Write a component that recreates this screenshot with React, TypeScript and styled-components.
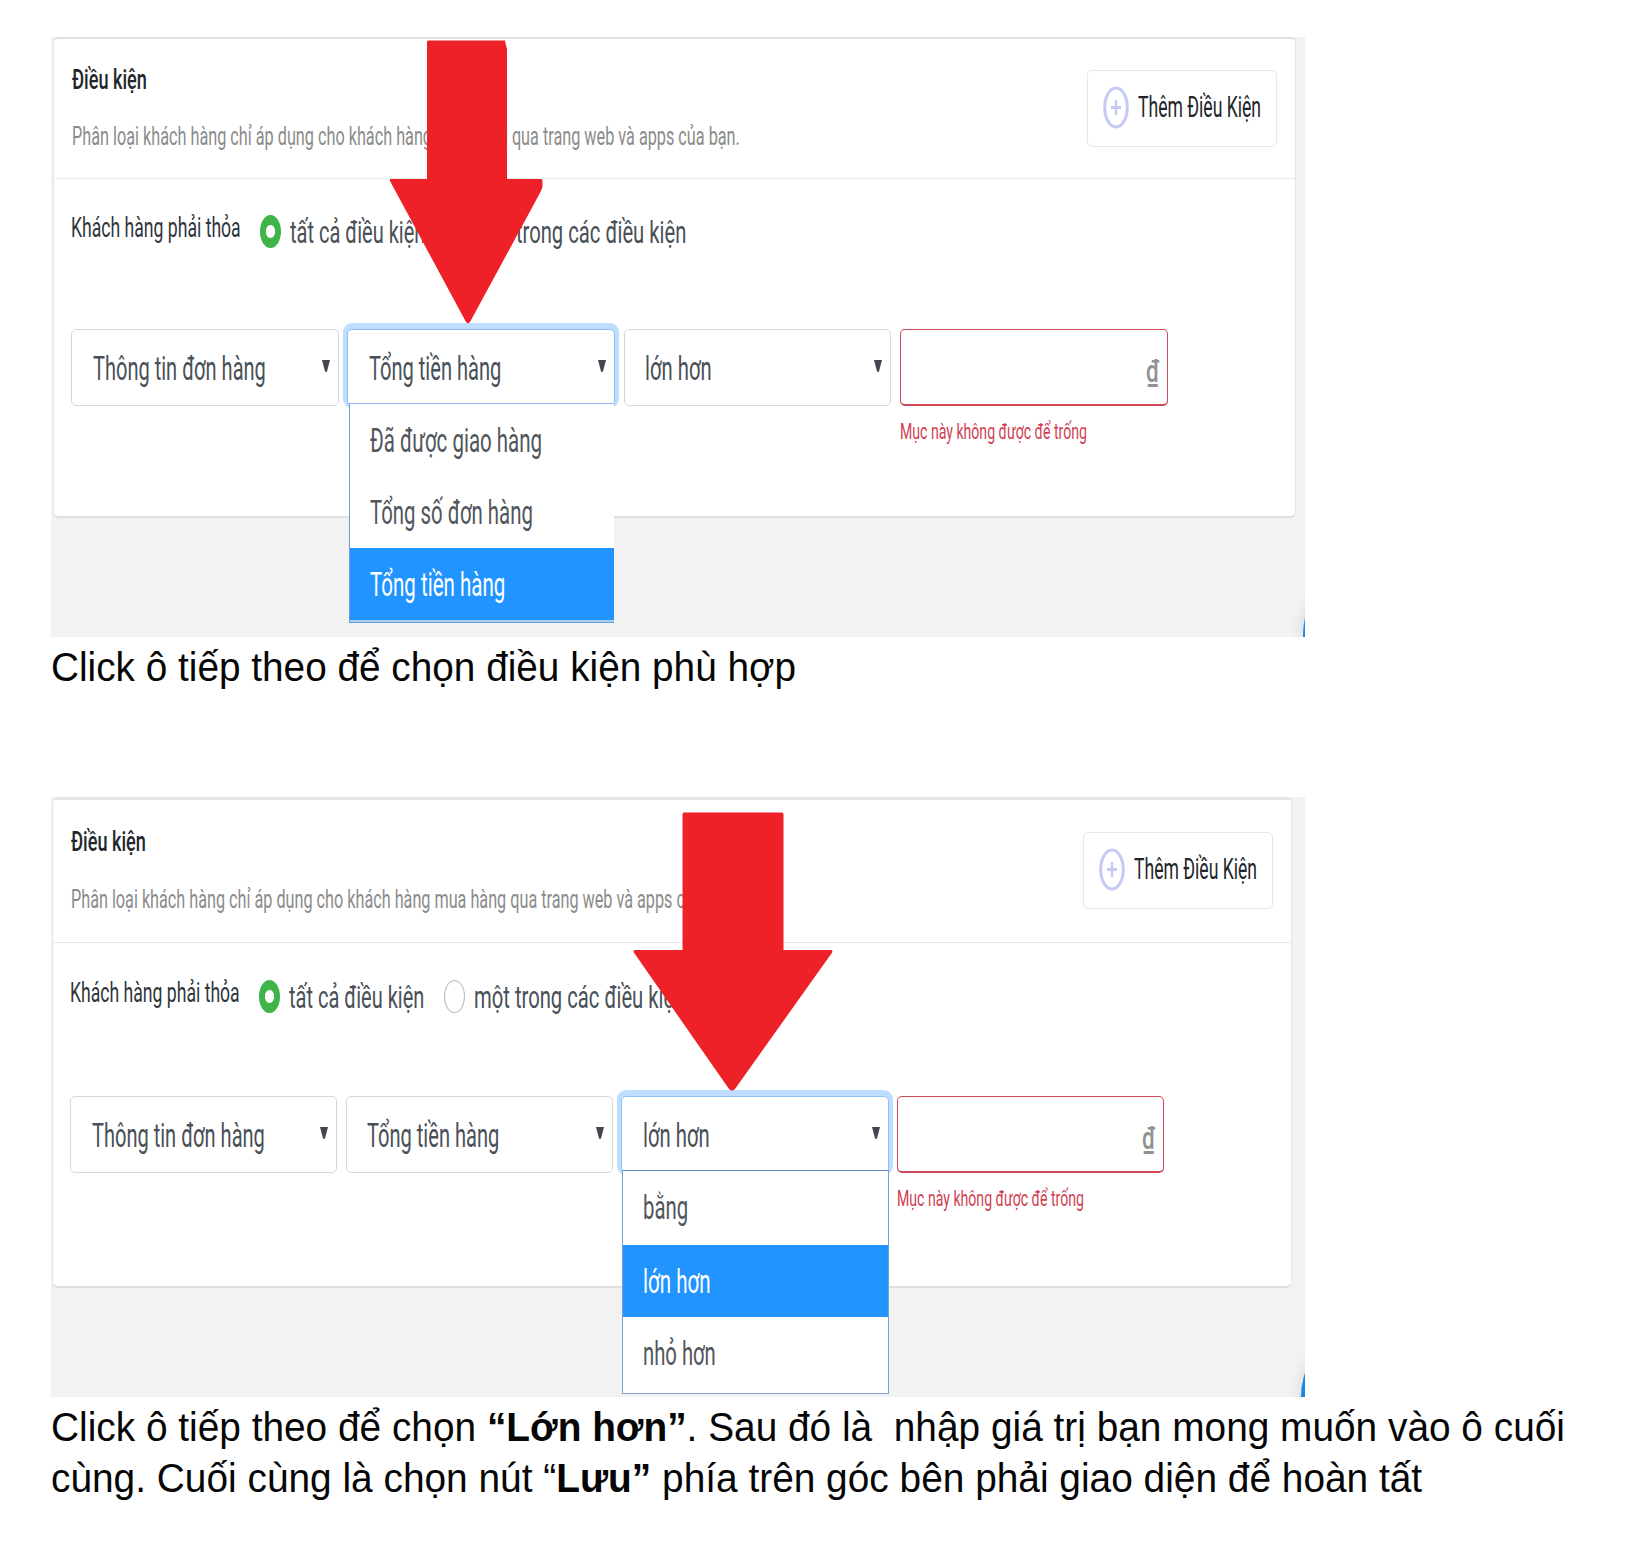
import React, { useLayoutEffect, useRef, useState } from "react";
import styled, { createGlobalStyle, css } from "styled-components";

const GlobalStyle = createGlobalStyle`
  *, *::before, *::after { box-sizing: border-box; }
  body { margin: 0; background: #fff; }
`;

/* ---------- text condensed to a given width ---------- */

const FitBox = styled.span<{ $w: number }>`
  display: block;
  flex: none;
  width: ${(p) => p.$w}px;
  white-space: pre;
`;

const FitInner = styled.span`
  display: inline-block;
  transform-origin: 0 50%;
`;

function Fit({ w, children }: { w: number; children: React.ReactNode }) {
  const ref = useRef<HTMLSpanElement>(null);
  const [scale, setScale] = useState(1);
  useLayoutEffect(() => {
    if (ref.current) setScale(w / ref.current.offsetWidth);
  }, [w]);
  return (
    <FitBox $w={w}>
      <FitInner ref={ref} style={{ transform: `scaleX(${scale})` }}>
        {children}
      </FitInner>
    </FitBox>
  );
}

/* ---------- page ---------- */

const Page = styled.main`
  width: 1652px;
  height: 1541px;
  padding: 37px 0 0 51px;
  background: #fff;
  overflow: hidden;
`;

const Caption = styled.p<{ $gap: number }>`
  margin: 0;
  padding-top: 5px;
  height: ${(p) => p.$gap}px;
  font: 40px/51px "Liberation Sans", Arial, sans-serif;
  color: #060606;
`;

const Shot = styled.section`
  position: relative;
  width: 1254px;
  height: 600px;
  overflow: hidden;
  background: #f2f2f2;
  font-family: Roboto, sans-serif;
`;

const Card = styled.div<{ $l: number; $w: number; $h: number; $top: number }>`
  width: ${(p) => p.$w}px;
  height: ${(p) => p.$h}px;
  margin-left: ${(p) => p.$l}px;
  background: #fff;
  border: 1px solid #e6e6e6;
  border-top: ${(p) => p.$top}px solid ${(p) => (p.$top > 2 ? "#e6e6e6" : "#dfdfdf")};
  border-bottom: 2px solid #dfdfdf;
  border-radius: 5px 5px 6px 6px;
`;

const Head = styled.header<{ $h: number; $line: string }>`
  display: flex;
  justify-content: space-between;
  height: ${(p) => p.$h}px;
  padding: 0 18px 0 17.5px;
  border-bottom: 1px solid ${(p) => p.$line};
`;

const Heading = styled.div<{ $pad: number }>`
  padding-top: ${(p) => p.$pad}px;
`;

const Title = styled.h2<{ $gap: number }>`
  margin: 0 0 ${(p) => p.$gap}px;
  font-size: 28px;
  line-height: 32px;
  font-weight: 500;
  color: #23272c;
`;

const Note = styled.p`
  margin: 0;
  font-size: 25px;
  line-height: 30px;
  color: #8b8b8b;
`;

const AddButton = styled.button<{ $mt: number }>`
  display: flex;
  align-items: center;
  width: 190px;
  height: 77px;
  margin: ${(p) => p.$mt}px 0 0;
  padding: 0 0 2px 15px;
  gap: 9px;
  background: #fff;
  border: 1px solid #e4e7ec;
  border-radius: 5px;
  font: 400 30px/36px Roboto, sans-serif;
  color: #212529;
  text-align: left;
`;

const Body = styled.div<{ $pad: number }>`
  padding: ${(p) => p.$pad}px 0 0 17px;
`;

const ChoiceRow = styled.div<{ $h: number }>`
  display: flex;
  align-items: flex-start;
  height: ${(p) => p.$h}px;
`;

const ChoiceLabel = styled.span`
  width: 189px;
  font-size: 27px;
  line-height: 32px;
  color: #2f353b;
`;

const Choice = styled.label`
  display: flex;
  align-items: flex-start;
  margin-right: 20px;
  padding-top: 2px;
  gap: 9px;
  font-size: 32px;
  line-height: 36px;
  color: #495057;
`;

const RadioDot = styled.i<{ $on: boolean }>`
  flex: none;
  width: 21px;
  height: 33px;
  margin-top: 1px;
  border-radius: 50%;
  ${(p) =>
    p.$on
      ? css`
          background: radial-gradient(ellipse 5px 7px at center, #fff 85%, #3fb549 100%);
        `
      : css`
          background: #fff;
          border: 1px solid #b9bdc2;
        `}
`;

const Fields = styled.div<{ $col: number }>`
  display: grid;
  grid-template-columns: repeat(4, ${(p) => p.$col}px);
  column-gap: 8.5px;
`;

const Field = styled.div<{ $focus?: boolean; $error?: boolean }>`
  position: relative;
  display: flex;
  align-items: center;
  justify-content: space-between;
  height: 76.5px;
  padding: 0 8px 0 ${(p) => (p.$error ? 0 : 20.5)}px;
  background: #fff;
  border: 1px solid ${(p) => (p.$error ? "#cf4858" : p.$focus ? "#8fc0f5" : "#d6d8db")};
  border-bottom-width: ${(p) => (p.$error ? 2 : 1)}px;
  border-radius: 5px;
  font-size: 33px;
  line-height: 40px;
  color: #495057;
  ${(p) =>
    p.$focus &&
    css`
      z-index: 1;
      box-shadow: 0 -2px 0 4px #bfdeff;
      clip-path: inset(-8px -6px -5px -6px);
    `}
`;

const FieldText = styled.span`
  padding-top: 3px;
`;

const Currency = styled.span`
  margin-left: auto;
  padding-top: 11px;
  font-size: 31px;
  font-weight: 500;
  color: #929292;
`;

const ErrorText = styled.p`
  margin: 11px 0 0;
  font-size: 22px;
  line-height: 30px;
  color: #cf3d50;
`;

const Cell = styled.div`
  position: relative;
`;

const Menu = styled.ul<{ $full: boolean }>`
  position: absolute;
  z-index: 3;
  top: 74px;
  left: ${(p) => (p.$full ? 0.5 : 1.5)}px;
  right: ${(p) => (p.$full ? 0 : 1)}px;
  margin: 0;
  padding: 0 0 ${(p) => (p.$full ? 3 : 2)}px;
  list-style: none;
  background: #fff;
  border: 1px solid ${(p) => (p.$full ? "#7ba0cf" : "#6f9cd2")};
  border-top-color: ${(p) => (p.$full ? "#5d8cc8" : "#93b5ee")};
  ${(p) => !p.$full && "border-right: 0; background: linear-gradient(#fff 98%, #a8cdf5 98%);"}
`;

const Option = styled.li<{ $active: boolean; $h: number }>`
  height: ${(p) => p.$h}px;
  padding: 17px 0 0 20.5px;
  font-size: 33px;
  line-height: 40px;
  color: ${(p) => (p.$active ? "#fff" : "#50565c")};
  background: ${(p) => (p.$active ? "#2294ff" : "#fff")};
`;

const Pointer = styled.svg`
  position: absolute;
  z-index: 5;
  inset: 0;
  pointer-events: none;
`;

const Bubble = styled.i<{ $x: number; $y: number }>`
  position: absolute;
  left: ${(p) => p.$x}px;
  top: ${(p) => p.$y}px;
  width: 60px;
  height: 96px;
  border-radius: 50%;
  background: #1687e8;
  box-shadow: 0 0 12px 3px rgba(0, 0, 0, 0.08);
`;

const Plus = () => (
  <svg width="26" height="43" viewBox="0 0 26 43" fill="none" stroke="#c5caf3">
    <ellipse cx="13" cy="21.500" rx="11.300" ry="19.400" strokeWidth="3" />
    <path d="M13 14v15" strokeWidth="2.400" />
    <path d="M8 21.500h10" strokeWidth="3" />
  </svg>
);

const CaretIcon = styled.svg`
  margin-top: -2px;
`;

const Caret = () => (
  <CaretIcon width="8" height="12" viewBox="0 0 8 12">
    <path d="M0 0h8L4.900 11.800H3.100z" fill="#42474d" />
  </CaretIcon>
);

/* ---------- data ---------- */

type Opt = { text: string; w: number; h: number };
type PanelSpec = {
  card: { l: number; w: number; h: number; top: number };
  headH: number;
  line: string;
  titlePad: number;
  titleGap: number;
  noteW: number;
  addTop: number;
  bodyPad: number;
  choiceH: number;
  col: number;
  open: number;
  active: string;
  full: boolean;
  options: Opt[];
  arrow: string;
  bubble: [number, number];
};

const selects = [
  { text: "Thông tin đơn hàng", w: 173 },
  { text: "Tổng tiền hàng", w: 132 },
  { text: "lớn hơn", w: 67 },
];

const panels: PanelSpec[] = [
  {
    card: { l: 2, w: 1243, h: 481, top: 2 },
    headH: 140,
    line: "#ebebeb",
    titlePad: 25,
    titleGap: 25.5,
    noteW: 668,
    addTop: 30.5,
    bodyPad: 33,
    choiceH: 117,
    col: 267.8,
    open: 1,
    active: "Tổng tiền hàng",
    full: false,
    options: [
      { text: "Đã được giao hàng", w: 172, h: 72 },
      { text: "Tổng số đơn hàng", w: 163, h: 72 },
      { text: "Tổng tiền hàng", w: 135, h: 72 },
    ],
    arrow:
      "M376 4.500l1-1h77l1 5 1 3V142h34q1.500 0 1.500 2v6l-2 5L419 285l-2 1.500-2-1.500L339 144v-2h37z",
    bubble: [1252, 550],
  },
  {
    card: { l: 1, w: 1240, h: 491, top: 3 },
    headH: 143.5,
    line: "#e3e6ea",
    titlePad: 26.5,
    titleGap: 26.5,
    noteW: 667,
    addTop: 32,
    bodyPad: 34,
    choiceH: 119,
    col: 267.2,
    open: 2,
    active: "lớn hơn",
    full: true,
    options: [
      { text: "bằng", w: 45, h: 73.5 },
      { text: "lớn hơn", w: 68, h: 72.5 },
      { text: "nhỏ hơn", w: 73, h: 72.5 },
    ],
    arrow: "M631.500 17l1-1.500h99l1 1.500V153h48.500l.5 2L684 292l-2 1.500h-2L678 292 582.500 155l.5-2H631.500z",
    bubble: [1249.5, 552],
  },
];

function Panel({ p }: { p: PanelSpec }) {
  return (
    <Shot>
      <Card $l={p.card.l} $w={p.card.w} $h={p.card.h} $top={p.card.top}>
        <Head $h={p.headH} $line={p.line}>
          <Heading $pad={p.titlePad}>
            <Title $gap={p.titleGap}><Fit w={75}>Điều kiện</Fit></Title>
            <Note>
              <Fit w={p.noteW}>
                Phân loại khách hàng chỉ áp dụng cho khách hàng mua hàng qua trang web và apps của bạn.
              </Fit>
            </Note>
          </Heading>
          <AddButton $mt={p.addTop}>
            <Plus />
            <Fit w={123}>Thêm Điều Kiện</Fit>
          </AddButton>
        </Head>
        <Body $pad={p.bodyPad}>
          <ChoiceRow $h={p.choiceH}>
            <ChoiceLabel><Fit w={169.5}>Khách hàng phải thỏa</Fit></ChoiceLabel>
            <Choice><RadioDot $on /><Fit w={135}>tất cả điều kiện</Fit></Choice>
            <Choice><RadioDot $on={false} /><Fit w={211}>một trong các điều kiện</Fit></Choice>
          </ChoiceRow>
          <Fields $col={p.col}>
            {selects.map((s, i) => (
              <Cell key={s.text}>
                <Field $focus={p.open === i}>
                  <FieldText><Fit w={s.w}>{s.text}</Fit></FieldText>
                  <Caret />
                </Field>
                {p.open === i && (
                  <Menu $full={p.full}>
                    {p.options.map((o) => (
                      <Option key={o.text} $h={o.h} $active={o.text === p.active}>
                        <Fit w={o.w}>{o.text}</Fit>
                      </Option>
                    ))}
                  </Menu>
                )}
              </Cell>
            ))}
            <Cell>
              <Field $error>
                <Currency><Fit w={13}>₫</Fit></Currency>
              </Field>
              <ErrorText><Fit w={187}>Mục này không được để trống</Fit></ErrorText>
            </Cell>
          </Fields>
        </Body>
      </Card>
      <Bubble $x={p.bubble[0]} $y={p.bubble[1]} />
      <Pointer width="1254" height="600" viewBox="0 0 1254 600">
        <path d={p.arrow} fill="#ee2129" />
      </Pointer>
    </Shot>
  );
}

export default function App() {
  return (
    <Page>
      <GlobalStyle />
      <Panel p={panels[0]} />
      <Caption $gap={159.5}><Fit w={745}>Click ô tiếp theo để chọn điều kiện phù hợp</Fit></Caption>
      <Panel p={panels[1]} />
      <Caption $gap={140}>
        <Fit w={1514}>
          Click ô tiếp theo để chọn <b>“Lớn hơn”</b>. Sau đó là{"  "}nhập giá trị bạn mong muốn vào ô cuối
        </Fit>
        <Fit w={1371}>
          cùng. Cuối cùng là chọn nút “<b>Lưu”</b> phía trên góc bên phải giao diện để hoàn tất
        </Fit>
      </Caption>
    </Page>
  );
}
